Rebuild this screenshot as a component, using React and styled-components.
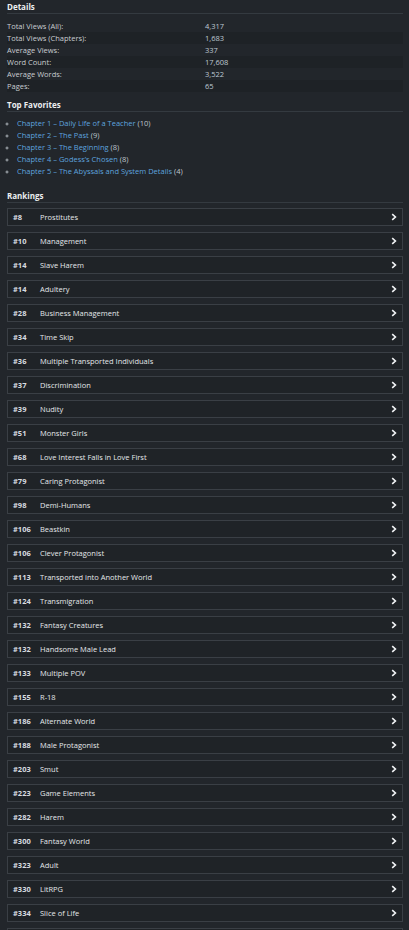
import React from 'react';
import styled, { createGlobalStyle } from 'styled-components';

const stats = [
  ['Total Views (All):', '4,317'],
  ['Total Views (Chapters):', '1,683'],
  ['Average Views:', '337'],
  ['Word Count:', '17,608'],
  ['Average Words:', '3,522'],
  ['Pages:', '65'],
];

const favorites = [
  ['Chapter 1 – Daily Life of a Teacher', 10],
  ['Chapter 2 – The Past', 9],
  ['Chapter 3 – The Beginning', 8],
  ['Chapter 4 – Godess\u2019s Chosen', 8],
  ['Chapter 5 – The Abyssals and System Details', 4],
];

const rankings = [
  [8, 'Prostitutes'], [10, 'Management'], [14, 'Slave Harem'], [14, 'Adultery'],
  [28, 'Business Management'], [34, 'Time Skip'], [36, 'Multiple Transported Individuals'],
  [37, 'Discrimination'], [39, 'Nudity'], [51, 'Monster Girls'],
  [68, 'Love Interest Falls in Love First'], [79, 'Caring Protagonist'], [98, 'Demi-Humans'],
  [106, 'Beastkin'], [106, 'Clever Protagonist'], [113, 'Transported into Another World'],
  [124, 'Transmigration'], [132, 'Fantasy Creatures'], [132, 'Handsome Male Lead'],
  [133, 'Multiple POV'], [155, 'R-18'], [186, 'Alternate World'], [188, 'Male Protagonist'],
  [203, 'Smut'], [223, 'Game Elements'], [282, 'Harem'], [300, 'Fantasy World'],
  [323, 'Adult'], [330, 'LitRPG'], [334, 'Slice of Life'],
];

function App() {
  return (
    <>
      <GlobalStyle />
      <Page>
        <Heading>Details</Heading>
        <StatsTable>
          <tbody>
            {stats.map(([label, value]) => (
              <StatRow key={label}>
                <td>{label}</td>
                <td>{value}</td>
              </StatRow>
            ))}
          </tbody>
        </StatsTable>

        <Heading>Top Favorites</Heading>
        <FavList>
          {favorites.map(([title, count]) => (
            <FavItem key={title}>
              <FavLink href="#">{title}</FavLink> ({count})
            </FavItem>
          ))}
        </FavList>

        <Heading $gap={5}>Rankings</Heading>
        <RankList>
          {rankings.map(([rank, name], i) => (
            <RankRow key={i} href="#">
              <Rank>#{rank}</Rank>
              <RankName>{name}</RankName>
              <Chevron viewBox="0 0 8 8">
                <path d="M2.2 1.2 L5.4 4 L2.2 6.8" />
              </Chevron>
            </RankRow>
          ))}
          <RankRow href="#" aria-hidden="true" />
        </RankList>
      </Page>
    </>
  );
}

export default App;

const GlobalStyle = createGlobalStyle`
  html, body {
    margin: 0;
    background: #22262b;
  }
  body {
    font-family: "Open Sans", "Liberation Sans", sans-serif;
    font-size: 7.5px;
    color: #c9cdd1;
  }
  *, *::before, *::after {
    box-sizing: border-box;
  }
`

const Page = styled.div`
  padding: 1px 6px 0 7px;
  display: flex;
  flex-direction: column;
  height: 930px;
  overflow: hidden;
`

const Heading = styled.h3`
  margin: 0;
  font-size: 8px;
  font-weight: 700;
  color: #eceef0;
  line-height: 11px;
  padding-bottom: 1px;
  border-bottom: 1px solid #343a40;
  margin-bottom: ${p => p.$gap ?? 6}px;
`

const StatsTable = styled.table`
  width: 100%;
  border-collapse: collapse;
  margin-bottom: 7px;

  td {
    width: 50%;
    padding: 0;
    height: 12px;
    line-height: 12px;
  }
  td:last-child {
    color: #bfc9d3;
  }
`

const StatRow = styled.tr`
  &:nth-child(even) {
    background: #1e2226;
  }
`

const FavList = styled.ul`
  margin: -1px 0 13px;
  padding-left: 10px;
  list-style: circle;

  li::marker {
    color: #aab1b8;
    font-size: 6px;
  }
`

const FavItem = styled.li`
  line-height: 12px;
  color: #bfc5cb;
`

const FavLink = styled.a`
  color: #5ea3df;
  text-decoration: none;
`

const RankList = styled.div`
  display: flex;
  flex-direction: column;
  gap: 6px;
  flex-shrink: 0;
`

const RankRow = styled.a`
  display: flex;
  align-items: center;
  flex-shrink: 0;
  height: 18px;
  border: 1px solid #3a3f45;
  background: #1f2327;
  padding: 0 4px 0 5px;
  text-decoration: none;
  color: #e4e7ea;
`

const Rank = styled.span`
  width: 27px;
  font-weight: 700;
  color: #d8dce0;
`

const RankName = styled.span`
  flex: 1;
`

const Chevron = styled.svg`
  width: 8px;
  height: 8px;
  fill: none;
  stroke: #f2f4f6;
  stroke-width: 1.6;
`
